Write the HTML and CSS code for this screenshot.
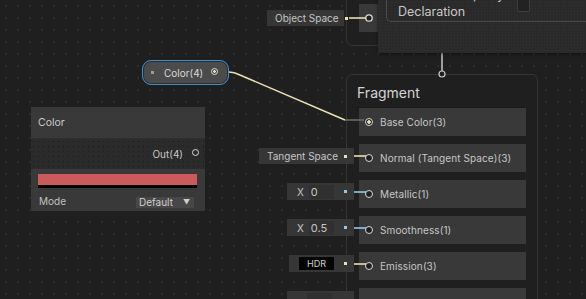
FILE: index.html
```html
<!DOCTYPE html>
<html lang="en">
<head>
    <meta charset="UTF-8">
    <meta name="viewport" content="width=device-width, initial-scale=1.0">
    <title>Shader Graph</title>
    <link rel="stylesheet" href="styles.css">
</head>
<body>
    <div class="canvas">

        <!-- vertex context (mostly off screen) -->
        <div class="context vertex">
            <div class="slot-row vertex-row"></div>
        </div>

        <!-- fragment context -->
        <div class="context fragment">
            <div class="context-title">Fragment</div>
            <div class="slots">
                <div class="slot-row"><span class="port port-filled"></span>Base Color(3)</div>
                <div class="slot-row"><span class="port"></span>Normal (Tangent Space)(3)</div>
                <div class="slot-row"><span class="port"></span>Metallic(1)</div>
                <div class="slot-row"><span class="port"></span>Smoothness(1)</div>
                <div class="slot-row"><span class="port"></span>Emission(3)</div>
                <div class="slot-row"></div>
            </div>
        </div>

        <svg class="edges" width="586" height="299" viewBox="0 0 586 299">
            <line x1="442" y1="53" x2="442" y2="71" stroke="#c9c9c9" stroke-width="1.5"/>
            <circle cx="442" cy="74" r="3" fill="#1f1f1f" stroke="#c9c9c9" stroke-width="1.2"/>
            <path d="M229 72 C233 72 236 73 240 75 L345 120" fill="none" stroke="#e9dfb2" stroke-width="1.6"/>
            <line x1="345" y1="120" x2="364" y2="120" stroke="#6f6f6f" stroke-width="1.5"/>
            <line x1="349" y1="18" x2="366" y2="18" stroke="#e9dfb2" stroke-width="1.6"/>
            <line x1="349" y1="156" x2="366" y2="156" stroke="#e9dfb2" stroke-width="1.6"/>
            <line x1="349" y1="192" x2="366" y2="192" stroke="#8fcbe2" stroke-width="1.6"/>
            <line x1="349" y1="228" x2="366" y2="228" stroke="#8fcbe2" stroke-width="1.6"/>
            <line x1="349" y1="264" x2="366" y2="264" stroke="#e9dfb2" stroke-width="1.6"/>
            <circle cx="369" cy="18" r="3.2" fill="#1f1f1f" stroke="#dcdcdc" stroke-width="1.3"/>
        </svg>

        <!-- inline inputs on the left of the context slots -->
        <div class="field object-space"><span class="field-label">Object Space</span><span class="dot"></span></div>
        <div class="field tangent"><span class="field-label">Tangent Space</span><span class="dot"></span></div>
        <div class="field vec metallic"><span class="axis">X</span><span class="num">0</span><span class="dot dot-blue"></span></div>
        <div class="field vec smooth"><span class="axis">X</span><span class="num">0.5</span><span class="dot dot-blue"></span></div>
        <div class="field hdr"><span class="hdr-box">HDR</span><span class="dot"></span></div>
        <div class="field last"><span class="num"></span></div>

        <div class="popup">
            <div class="popup-inner">
                <div class="popup-text">Override Property<br>Declaration</div>
                <div class="popup-check"></div>
            </div>
        </div>

        <!-- property pill -->
        <div class="pill">
            <span class="pill-dot"></span>
            <span class="pill-label">Color(4)</span>
            <span class="pill-port"></span>
        </div>

        <!-- color node -->
        <div class="node color-node">
            <div class="node-title">Color</div>
            <div class="node-outputs">
                <span>Out(4)</span><span class="out-port"></span>
            </div>
            <div class="node-body">
                <div class="swatch"></div>
                <div class="mode-row">
                    <span>Mode</span>
                    <span class="dropdown">Default <span class="arrow">&#9660;</span></span>
                </div>
            </div>
        </div>

    </div>
</body>
</html>
```

FILE: styles.css
```css
body{
    margin: 0;
    background: #1f1f1f;
    font-family: Inter, "Noto Sans", sans-serif;
    font-size: 10px;
    color: #c8c8c8;
}
.canvas{
    position: relative;
    width: 586px;
    height: 299px;
    overflow: hidden;
    background-color: #1f1f1f;
    background-image: radial-gradient(#2c2c2c 0.7px, transparent 1px);
    background-size: 12px 12px;
}
.edges{
    position: absolute;
    left: 0;
    top: 0;
}

/* contexts */
.context{
    position: absolute;
    box-sizing: border-box;
    border: 1px solid #353535;
    border-radius: 6px;
    background: #1f1f1f;
}
.vertex{
    left: 346px;
    top: -60px;
    width: 192px;
    height: 106px;
}
.vertex-row{
    position: absolute;
    left: 12px;
    top: 63px;
    width: 30px;
    height: 28px;
}
.fragment{
    left: 346px;
    top: 74px;
    width: 192px;
    height: 240px;
    padding: 0 11px 0 12px;
}
.context-title{
    font-size: 14px;
    color: #d4d4d4;
    padding: 9px 0 0 0;
    margin-left: -2px;
    height: 23px;
    line-height: 17px;
    border-bottom: 1px dotted #161616;
}
.slots{
    display: flex;
    flex-direction: column;
    gap: 8px;
}
.slot-row{
    height: 28px;
    background: #393939;
    display: flex;
    align-items: center;
    gap: 7px;
    padding-left: 6px;
    font-size: 10px;
    letter-spacing: 0.1px;
    color: #c6c6c6;
    box-sizing: border-box;
}
.port{
    width: 6px;
    height: 6px;
    border: 1.3px solid #d8d8d8;
    border-radius: 50%;
    background: #1f1f1f;
    flex: none;
}
.port-filled{
    background: radial-gradient(#e9dfb2 1.5px, #1f1f1f 2px);
}

/* inline fields */
.field{
    position: absolute;
    height: 17px;
    box-sizing: border-box;
    background: #363636;
    display: flex;
    align-items: center;
    justify-content: space-between;
    padding: 0 7px 0 8px;
    font-size: 10px;
    color: #c6c6c6;
}
.field-label{
    white-space: nowrap;
}
.dot{
    width: 3px;
    height: 3px;
    background: #e9dfb2;
    flex: none;
}
.dot-blue{
    background: #8fcbe2;
}
.object-space{
    left: 267px;
    top: 10px;
    width: 77px;
    height: 16px;
    padding-right: 0;
}
.object-space .dot{
    margin-right: -4px;
}
.tangent{
    left: 259px;
    top: 148px;
    width: 95px;
    height: 16px;
}
.vec{
    left: 287px;
    width: 67px;
    padding-left: 10px;
    justify-content: flex-start;
    gap: 5px;
}
.vec .dot{
    margin-left: auto;
}
.metallic{
    top: 183px;
}
.smooth{
    top: 219px;
}
.num{
    width: 25px;
    height: 14px;
    line-height: 14px;
    background: #303030;
    padding-left: 2px;
    box-sizing: border-box;
    font-size: 11px;
}
.hdr{
    left: 289px;
    top: 255px;
    width: 65px;
    padding-left: 10px;
}
.hdr-box{
    width: 35px;
    height: 13px;
    background: #050505;
    color: #cfcfcf;
    font-size: 9px;
    line-height: 13px;
    text-align: center;
}
.last{
    left: 287px;
    top: 291px;
    width: 67px;
    padding-left: 20px;
}

/* popup */
.popup{
    position: absolute;
    left: 378px;
    top: -20px;
    width: 220px;
    height: 73px;
    background-color: #2a2a2a;
    background-image: radial-gradient(#323232 0.6px, transparent 0.9px);
    background-size: 3px 3px;
    box-shadow: 0 1px 3px rgba(0,0,0,0.5);
    padding: 0 0 0 8px;
    box-sizing: border-box;
}
.popup-inner{
    height: 42px;
    box-sizing: border-box;
    border: 1px solid #4a4a4a;
    border-top: none;
    border-radius: 0 0 0 5px;
    display: flex;
    align-items: flex-end;
    padding: 0 0 1px 11px;
    position: relative;
}
.popup-text{
    font-size: 12.5px;
    line-height: 17px;
    color: #c8c8c8;
}
.popup-check{
    position: absolute;
    left: 130px;
    top: 18px;
    width: 11px;
    height: 12px;
    background: #222;
    border: 1px solid #3e3e3e;
    border-radius: 2px;
}

/* property pill */
.pill{
    position: absolute;
    left: 142px;
    top: 60px;
    width: 87px;
    height: 25px;
    box-sizing: border-box;
    border: 1.5px solid #3a8fd4;
    border-radius: 9px;
    background: #4b4b4b;
    display: flex;
    align-items: center;
    padding: 0 0 0 8px;
    box-shadow: inset 0 0 0 1px #2c2c2c;
}
.pill-dot{
    width: 3px;
    height: 3px;
    background: #9a9a9a;
}
.pill-label{
    margin-left: 10px;
    color: #d8d8d8;
    font-size: 10px;
}
.pill-port{
    margin-left: 8px;
    margin-top: -2px;
    width: 5px;
    height: 5px;
    border: 1.2px solid #d8d8d8;
    border-radius: 50%;
    background: radial-gradient(#e9dfb2 1px, #4b4b4b 1.6px);
}

/* color node */
.node{
    position: absolute;
    box-sizing: border-box;
    background: #393939;
}
.color-node{
    left: 31px;
    top: 107px;
    width: 174px;
    height: 104px;
}
.node-title{
    height: 32px;
    line-height: 32px;
    padding-left: 7px;
    font-size: 10.5px;
    color: #c8c8c8;
    border-bottom: 1px solid #2f2f2f;
    box-sizing: border-box;
}
.node-outputs{
    height: 30px;
    background-color: #2b2b2b;
    background-image: radial-gradient(#1c1c1c 0.6px, transparent 0.9px);
    background-size: 5px 5px;
    display: flex;
    justify-content: flex-end;
    align-items: center;
    gap: 9px;
    padding-right: 6px;
    color: #c6c6c6;
}
.out-port{
    width: 5px;
    height: 5px;
    border: 1.3px solid #d8d8d8;
    border-radius: 50%;
    margin-top: -4px;
}
.node-body{
    padding: 5px 8px 0 7px;
}
.swatch{
    height: 11px;
    background: #cb5b5b;
    border-bottom: 3px solid #000;
}
.mode-row{
    display: flex;
    justify-content: space-between;
    align-items: center;
    margin-top: 5px;
    padding-left: 1px;
    color: #c0c0c0;
}
.dropdown{
    width: 58px;
    height: 11px;
    margin-top: 4px;
    margin-right: 3px;
    background: #474747;
    font-size: 10px;
    line-height: 11px;
    padding-left: 3px;
    box-sizing: border-box;
    display: flex;
    justify-content: space-between;
    color: #cfcfcf;
}
.arrow{
    font-size: 7px;
    padding-right: 4px;
}
```
